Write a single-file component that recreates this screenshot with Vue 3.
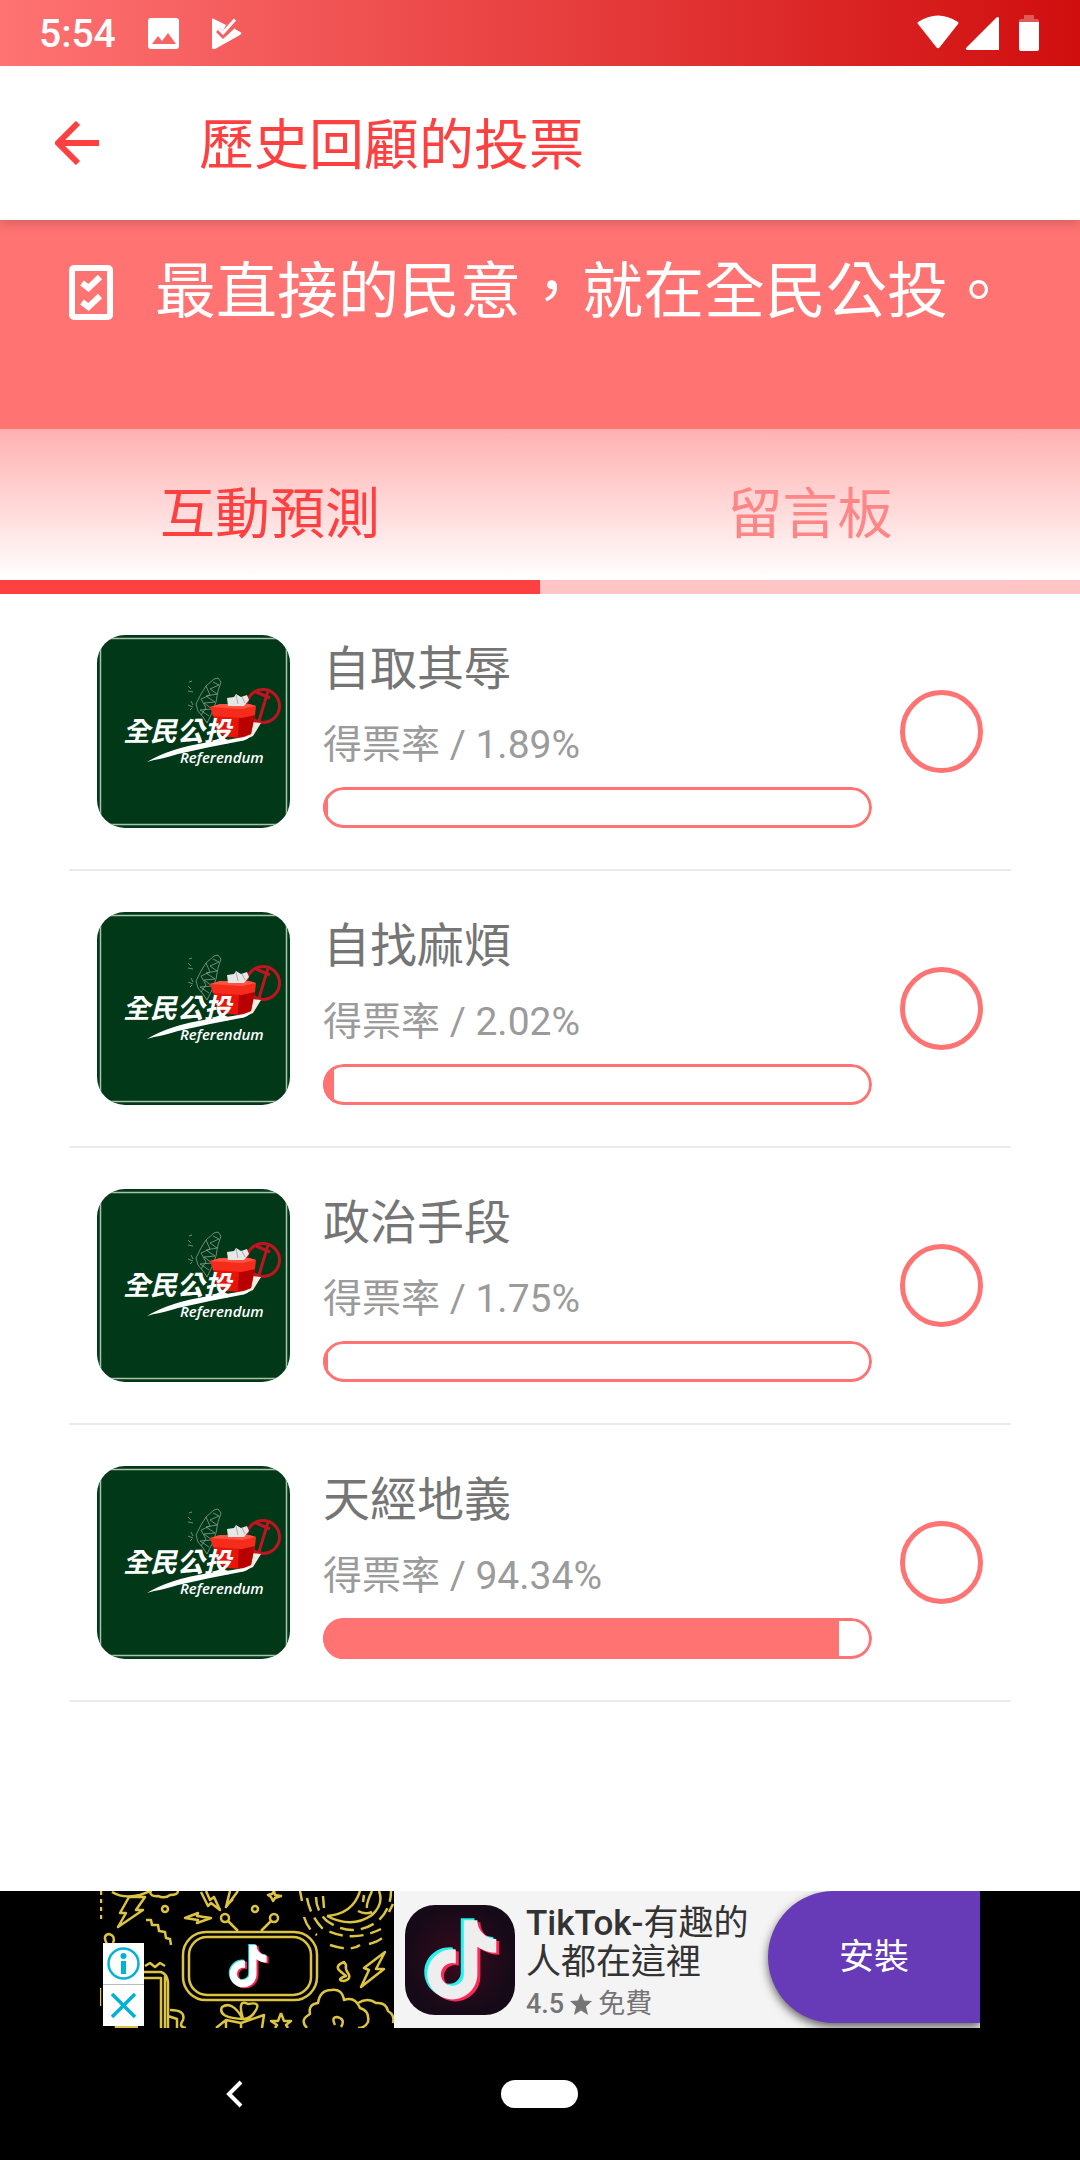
<template>
  <div class="app">
    <header class="top">
      <div class="status-bar">
        <div class="status-left">
          <span class="clock">5:54</span>
          <svg width="31" height="31" viewBox="0 0 31 31"><path fill-rule="evenodd" d="M3 0H28Q31 0 31 3V28Q31 31 28 31H3Q0 31 0 28V3Q0 0 3 0ZM4 26H28L20 15L14 23L10 18Z" fill="#fff"/></svg>
          <svg width="31" height="31" viewBox="0 0 31 31">
            <path d="M1 1Q1 0 3 1L15 7L24 1V11L30 14.500Q31 15.500 29 17L4 31Q1 32 1 29Z" fill="#fff"/>
            <path d="M15 7L25 -3L31 4L23 11L12 21L5 14L9 10L12 13Z" fill="#f55f5f"/>
            <path d="M8 11L12 15L24 1.500" fill="none" stroke="#fff" stroke-width="3"/>
          </svg>
        </div>
        <div class="status-right">
          <svg width="42" height="36" viewBox="0 0 42 36"><path d="M1 9Q0 8 1 7Q21 -6 41 7Q42 8 41 9L22.500 32.500Q21 34 19.500 32.500Z" fill="#fff"/></svg>
          <svg width="34" height="36" viewBox="0 0 34 36"><path d="M31 3Q33 1 34 3V35H2Q0 34 1 33Z" fill="#fff"/></svg>
          <svg class="battery" width="20" height="36" viewBox="0 0 20 36"><path d="M5 0H15V4H18Q20 4 20 6V8H0V6Q0 4 2 4H5Z" fill="#fff" opacity="0.3"/><path d="M0 7H20V34Q20 36 18 36H2Q0 36 0 34Z" fill="#fff"/></svg>
        </div>
      </div>
      <div class="toolbar">
        <button class="back-btn" type="button" aria-label="返回">
          <svg width="44" height="44" viewBox="0 0 44 44"><path d="M44 22H4M23 2L3 22L23 42" fill="none" stroke="#ff4040" stroke-width="6"/></svg>
        </button>
        <h1>歷史回顧的投票</h1>
      </div>
    </header>

    <section class="banner">
      <svg width="44" height="55" viewBox="0 0 44 55">
        <rect x="3" y="3" width="38" height="49" rx="2" fill="none" stroke="#fff" stroke-width="6"/>
        <path d="M13 18L19.500 23L31 12M13 37L19.500 42L31 31" fill="none" stroke="#fff" stroke-width="6"/>
      </svg>
      <p>最直接的民意，就在全民公投。</p>
    </section>

    <div class="tabs" role="tablist">
      <button
        v-for="tab in tabs"
        :key="tab"
        type="button"
        role="tab"
        class="tab"
        :class="{ active: tab === activeTab }"
        :aria-selected="tab === activeTab"
        @click="activeTab = tab"
      >{{ tab }}</button>
    </div>

    <main class="options">
      <label v-for="option in options" :key="option.name" class="option">
        <svg class="logo" viewBox="0 0 193 193">
          <rect width="193" height="193" fill="#003818"/>
          <path d="M3.500 0V193M189.500 0V193M0 3.500H193M0 189.500H193" stroke="#a9c4a9" stroke-width="1.500"/>
          <!-- island outline -->
          <g fill="none" stroke="#86a292" stroke-width="0.800">
            <path d="M117 44L121 43L124 47L121 56L119 67L115 78L110 88L106 82L101 76L99 69L104 59L109 51Z"/>
            <path d="M116 47L122 50L113 54L120 59L109 61L118 67L107 68L115 74L103 75L112 81M109 51L113 60L104 64L109 73L104 80"/>
            <path d="M92 47L95 46M91 51L94 54M91 56L96 57M94 66L96 70M91 70L96 72M93 75L95 73"/>
          </g>
          <!-- ballot box with stamp -->
          <circle cx="166" cy="71" r="16.500" fill="none" stroke="#c01420" stroke-width="3"/>
          <path d="M171 56L162 86M159 57L173 63" fill="none" stroke="#c01420" stroke-width="3"/>
          <path d="M152 91L156 87L164 88L156 101L145 106Z" fill="#efece2"/>
          <path d="M116 80L158 80L154 99L145 103L130 102L120 97Z" fill="#e8140c"/>
          <path d="M142 81L158 78L154 99L141 103Z" fill="#b80000"/>
          <path d="M113 72L123 69H152L159 71L158 80L145 83L116 81Z" fill="#f52c1c"/>
          <path d="M113 72L123 69H152L159 71L145 74Z" fill="#ff5540"/>
          <path d="M130 63L137 62L139 59L144 62L150 60L152 65L147 71H131Z" fill="#e7e7e7"/>
          <path d="M139 60L141 69M145 62L148 68" stroke="#aaa" stroke-width="1"/>
          <path d="M50 127Q73 113 112 107Q132 105 153 101Q151 105 144 106Q111 112 81 119Q65 124 57 125Z" fill="#fff"/>
          <text class="logo-zh" x="26" y="106">全民公投</text>
          <text class="logo-en" x="83" y="128">Referendum</text>
        </svg>
        <div class="info">
          <h2>{{ option.name }}</h2>
          <p>得票率 / {{ option.rate }}%</p>
          <div class="bar" role="progressbar" :aria-valuenow="option.rate" aria-valuemin="0" aria-valuemax="100" :aria-label="option.name">
            <div class="bar-fill" :style="{ width: Math.floor(option.rate) + '%' }"></div>
          </div>
        </div>
        <input v-model="picked" type="radio" name="vote" :value="option.name" :aria-label="option.name">
      </label>
    </main>

    <footer class="bottom">
      <div class="ad">
        <div class="ad-picture">
          <svg viewBox="0 0 294 137" width="294" height="137">
            <g fill="none" stroke="#dcc440" stroke-width="2.500" stroke-linejoin="round">
              <rect x="83" y="41" width="134" height="68" rx="23"/>
              <rect x="89" y="46" width="122" height="58" rx="18"/>
              <circle cx="125" cy="27" r="4"/>
              <circle cx="174" cy="27" r="4"/>
              <path d="M128 30L138 40M171 30L161 40"/>
              <circle cx="65" cy="18" r="3"/>
              <circle cx="155" cy="18" r="3"/>
              <path d="M1 0V30" stroke-dasharray="4 4"/>
              <path d="M12 1Q23 8 40 4Q50 0 52 0M50 0Q50 6 58 5Q65 8 70 4Q78 4 78 0"/>
              <path d="M29 6L45 6L36 19L43 19L18 36L26 22H20Z"/>
              <path d="M101 1L108 15L111 12L120 19L114 6L110 9L106 0M130 0L126 16L138 0M128 13L133 8"/>
              <path d="M85 27L98 22L97 25L111 27L97 32L98 29Z"/>
              <path d="M174 0L175 4L181 5L175 7L173 10L171 6L168 4L172 3Z"/>
              <path d="M46 29L51 29L52 34L58 34L59 40L65 41L66 47L70 48L71 54M45 75L50 72L55 76L60 72L65 75"/>
              <path d="M7 53Q2 44 9 43Q16 45 13 52"/>
              <path d="M227 25Q252 38 272 24Q284 13 279 0M227 25Q253 23 260 0M258 20Q265 24 272 21M272 0Q266 13 267 17M264 4L263 11"/>
              <path d="M216 6Q216 20 227 30Q253 48 278 30Q291 18 291 0M207 7Q210 24 222 37Q251 53 281 38M204 26Q208 39 217 44M230 54Q251 61 260 54M269 53Q281 50 286 43M200 0L202 10M223 5L224 17M289 21L293 13" stroke-dasharray="14 7"/>
              <path d="M244 71Q234 75 240 80L246 85Q235 89 244 90Q252 88 248 82Q245 78 246 74Z"/>
              <path d="M285 61L264 77L269 79L261 96L284 78L276 78Z"/>
              <path d="M207 137Q199 129 210 123Q208 113 218 112Q220 99 231 99Q242 97 244 109Q255 105 260 117Q270 120 268 131Q265 137 258 137M258 112Q268 106 276 112Q286 111 288 120Q295 124 293 132M235 134Q231 126 237 126Q246 128 241 136"/>
              <path d="M181 122L184 130L191 130L186 134L188 137M181 122L178 130L171 130L177 134L175 137"/>
              <path d="M116 137L126 129L141 132L164 124L162 137M126 129V137M141 132V137M144 128Q117 127 122 116Q132 109 143 128Q137 107 148 113Q163 110 154 122Q151 127 144 128"/>
              <path d="M42 81H61Q67 83 68 91V137M42 87H61V137M65 85V137M70 119Q86 119 83 129Q78 136 86 137M68 125L77 128V137"/>
              <path d="M0 97V115M5 100V113M15 136H38M16 130V137"/>
            </g>
            <g transform="translate(120 47)">
              <path :d="notePath" transform="translate(-1 -1) scale(2.350)" fill="#28e4dc"/>
              <path :d="notePath" transform="translate(2 1) scale(2.350)" fill="#f52555"/>
              <path :d="notePath" transform="scale(2.350)" fill="#fff"/>
            </g>
          </svg>
          <div class="ad-choices">
            <button type="button" aria-label="廣告資訊">
              <svg width="33" height="33" viewBox="0 0 33 33"><circle cx="16.500" cy="16.500" r="15" fill="none" stroke="#00b2d6" stroke-width="2.500"/><circle cx="16.500" cy="9" r="3" fill="#00b2d6"/><path d="M16.500 14V27" stroke="#00b2d6" stroke-width="5"/></svg>
            </button>
            <button type="button" aria-label="關閉廣告">
              <svg width="33" height="33" viewBox="0 0 33 33"><path d="M5 5L28 28M28 5L5 28" stroke="#00b2d6" stroke-width="3.500"/></svg>
            </button>
          </div>
        </div>
        <svg class="ad-icon" width="110" height="110" viewBox="0 0 110 110">
          <defs>
            <radialGradient id="iconShade"><stop offset="0" stop-color="#390a1c"/><stop offset="1" stop-color="#160a18"/></radialGradient>
          </defs>
          <rect width="110" height="110" rx="30" fill="url(#iconShade)"/>
          <path :d="notePath" transform="translate(1 0) scale(4.400)" fill="#22f4ee"/>
          <path :d="notePath" transform="translate(7 4) scale(4.400)" fill="#fe2858"/>
          <path :d="notePath" transform="translate(4 2) scale(4.400)" fill="#eee"/>
        </svg>
        <div class="ad-text">
          <p class="ad-title"><b>TikTok-</b>有趣的<br>人都在這裡</p>
          <p class="ad-meta">
            <b>4.5</b>
            <svg width="22" height="22" viewBox="0 0 22 22"><path d="M11 0L14 7.500L22 8L16 13.500L18 22L11 17.500L4 22L6 13.500L0 8L8 7.500Z" fill="#757575"/></svg>
            <span>免費</span>
          </p>
        </div>
        <button class="install-btn" type="button">安裝</button>
      </div>
      <nav class="system-nav">
        <button type="button" aria-label="上一頁">
          <svg width="18" height="28" viewBox="0 0 18 28"><path d="M15 2L3 14L15 26" fill="none" stroke="#fff" stroke-width="4"/></svg>
        </button>
        <button type="button" aria-label="主畫面"><span class="home-pill"></span></button>
        <span></span>
      </nav>
    </footer>
  </div>
</template>

<script setup>
import { ref } from 'vue'

const tabs = ['互動預測', '留言板']
const activeTab = ref('互動預測')
const picked = ref('')
const options = [
  { name: '自取其辱', rate: 1.89 },
  { name: '自找麻煩', rate: 2.02 },
  { name: '政治手段', rate: 1.75 },
  { name: '天經地義', rate: 94.34 }
]
const notePath = 'M16.600 5.820A4.280 4.280 0 0 1 15.540 3h-3.090v12.400a2.590 2.590 0 0 1-2.590 2.500c-1.420 0-2.600-1.160-2.600-2.600 0-1.720 1.660-3.010 3.370-2.480V9.660c-3.450-.460-6.470 2.220-6.470 5.640 0 3.330 2.760 5.700 5.690 5.700 3.140 0 5.690-2.550 5.690-5.700V9.010a7.350 7.350 0 0 0 4.300 1.380V7.300s-1.880.090-3.240-1.480z'
</script>

<style>
body {
  background: #fff;
}
</style>

<style scoped>
.app {
  min-height: 100vh;
  display: flex;
  flex-direction: column;
  font-family: Roboto, "Noto Sans CJK TC", sans-serif;
}
h1, h2, p {
  margin: 0;
  font-weight: 400;
}
button {
  font-family: inherit;
  border: none;
  background: none;
  padding: 0;
  cursor: pointer;
}
svg {
  display: block;
  flex: none;
}
.top {
  position: relative;
  z-index: 1;
  box-shadow: 0 2px 12px rgba(0, 0, 0, 0.2);
}
.status-bar {
  height: 66px;
  padding: 0 41px 0 39px;
  display: flex;
  align-items: center;
  justify-content: space-between;
  background: linear-gradient(90deg, #ff7373, #e84040 50%, #d00e0e);
}
.status-left, .status-right {
  display: flex;
  align-items: center;
}
.status-left {
  gap: 32px;
}
.status-right {
  gap: 6px;
}
.battery {
  margin-left: 14px;
}
.clock {
  padding-top: 2px;
  color: #fff;
  font-size: 39px;
  font-weight: 500;
}
.toolbar {
  height: 154px;
  padding: 0 55px;
  display: flex;
  align-items: center;
  gap: 100px;
  background: #fff;
}
.toolbar h1 {
  padding-top: 4px;
  color: #ff4040;
  font-size: 55px;
  line-height: 80px;
}
.banner {
  height: 209px;
  box-sizing: border-box;
  padding: 28px 69px;
  display: flex;
  align-items: flex-start;
  gap: 42px;
  background: #ff7373;
}
.banner svg {
  margin-top: 17px;
}
.banner p {
  color: #fff;
  font-size: 61px;
  line-height: 88px;
}
.tabs {
  display: flex;
  background: linear-gradient(#ffb0b0, #fff 151px);
}
.tab {
  flex: 1;
  height: 165px;
  padding-top: 8px;
  border-bottom: 14px solid #ffc4c4;
  color: #ff8686;
  font-size: 55px;
}
.tab.active {
  color: #ff4040;
  border-bottom-color: #ff4040;
}
.options {
  flex: 1;
  padding: 0 69px;
}
.option {
  display: flex;
  align-items: center;
  padding: 41px 28px;
  border-bottom: 2px solid #ebebeb;
  cursor: pointer;
}
.logo {
  width: 193px;
  height: 193px;
  border-radius: 28px;
}
.logo-zh, .logo-en {
  fill: #fff;
  font-style: italic;
}
.logo-zh {
  font-size: 27px;
  font-weight: 700;
}
.logo-en {
  font-family: "Open Sans", sans-serif;
  font-size: 15px;
  font-weight: 600;
}
.info {
  flex: 1;
  height: 193px;
  margin: 0 28px 0 33px;
  display: flex;
  flex-direction: column;
}
.info h2 {
  color: #757575;
  font-size: 47px;
  line-height: 68px;
}
.info p {
  color: #9b9b9b;
  font-size: 39px;
  line-height: 84px;
}
.bar {
  height: 41px;
  box-sizing: border-box;
  border-radius: 21px;
  overflow: hidden;
  position: relative;
}
.bar::after {
  content: "";
  position: absolute;
  inset: 0;
  border: 3px solid #ff7373;
  border-radius: 21px;
}
.bar-fill {
  height: 100%;
  background: #ff7373;
}
.option input {
  appearance: none;
  flex: none;
  width: 83px;
  height: 83px;
  margin: 0;
  border: 5px solid #ff7373;
  border-radius: 50%;
}
.option input:checked {
  background: #ff7373;
  box-shadow: inset 0 0 0 10px #fff;
}
.bottom {
  background: #000;
}
.ad {
  max-width: 880px;
  height: 137px;
  margin: 0 auto;
  display: flex;
  background: #f4f4f4;
  overflow: hidden;
}
.ad-picture {
  position: relative;
  background: #000;
}
.ad-choices {
  position: absolute;
  left: 3px;
  top: 52px;
  display: flex;
  flex-direction: column;
  gap: 1px;
  background: #bbb;
}
.ad-choices button {
  width: 41px;
  height: 41px;
  display: flex;
  align-items: center;
  justify-content: center;
  background: #fff;
}
.ad-icon {
  margin: 14px 11px 0 11px;
}
.ad-text {
  flex: 1;
  padding-top: 13px;
  white-space: nowrap;
}
.ad-text b {
  font-weight: 500;
}
.ad-title {
  color: #333;
  font-size: 35px;
  line-height: 39px;
}
.ad-meta {
  display: flex;
  align-items: center;
  gap: 6px;
  color: #757575;
  font-size: 27px;
  line-height: 44px;
}
.install-btn {
  width: 212px;
  height: 132px;
  padding-bottom: 8px;
  border-radius: 66px 0 0 66px;
  background: #673ab7;
  color: #fff;
  font-size: 35px;
  box-shadow: 0 4px 10px rgba(0, 0, 0, 0.6);
}
.system-nav {
  height: 132px;
  padding: 0 82px;
  display: grid;
  grid-template-columns: repeat(3, 1fr);
}
.system-nav button {
  display: flex;
  align-items: center;
  justify-content: center;
}
.home-pill {
  width: 77px;
  height: 28px;
  border-radius: 14px;
  background: #fff;
}
</style>
